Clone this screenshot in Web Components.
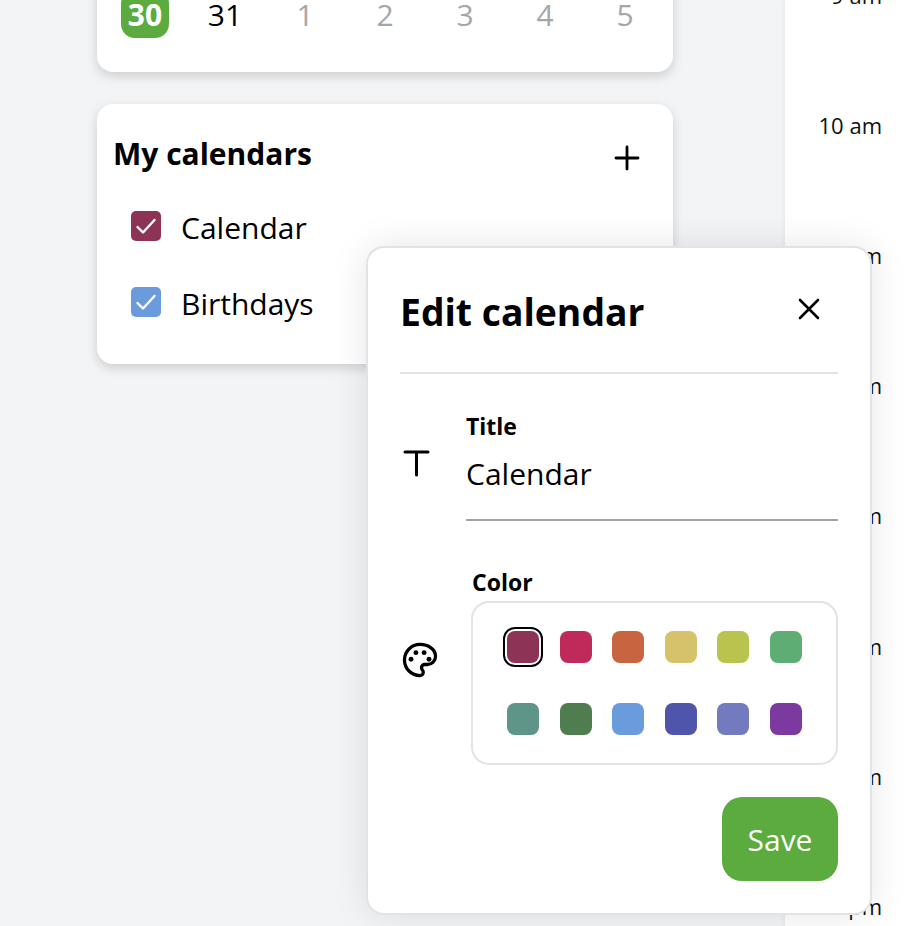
<!doctype html>
<html>
<head>
<meta charset="utf-8">
<style>
html, body { margin: 0; height: 100%; overflow: hidden; }
body { background: #f3f4f6; color: #000; font-family: "Open Sans", "Noto Sans", sans-serif; }
</style>
</head>
<body>
<calendar-page>
  <mini-month slot="sidebar"></mini-month>
  <my-calendars slot="sidebar">
    <calendar-row color="#8c3356">Calendar</calendar-row>
    <calendar-row color="#6a9bdc">Birthdays</calendar-row>
  </my-calendars>
  <hour-column slot="hours"></hour-column>
  <edit-calendar slot="dialog"></edit-calendar>
</calendar-page>

<script>
class CalendarPage extends HTMLElement {
  constructor() {
    super()
    this.attachShadow({ mode: 'open' })
    this.shadowRoot.innerHTML = `
<style>
:host { display: flex; position: relative; height: 926px; overflow: hidden; }
.left { width: 785px; box-sizing: border-box; padding-left: 97px; display: flex; flex-direction: column; gap: 32px; flex: none; }
.right { flex: 1; background: #fff; box-shadow: 0 0 6px rgba(0,0,0,.08); }
</style>
<div class="left"><slot name="sidebar"></slot></div>
<div class="right"><slot name="hours"></slot></div>
<slot name="dialog"></slot>
`
  }
}
customElements.define('calendar-page', CalendarPage)

class MiniMonth extends HTMLElement {
  constructor() {
    super()
    this.attachShadow({ mode: 'open' })
    let days = [[30, 'today'], [31, ''], [1, 'other'], [2, 'other'], [3, 'other'], [4, 'other'], [5, 'other']]
    this.shadowRoot.innerHTML = `
<style>
:host { display: block; width: 576px; box-sizing: border-box; height: 112px; margin-top: -40px; padding: 30px 8px 0; background: #fff; border-radius: 16px; box-shadow: 0 4px 12px rgba(0,0,0,.16); }
.days { display: grid; grid-template-columns: repeat(7, 80px); }
.day { height: 48px; width: 48px; justify-self: center; border-radius: 14px; display: flex; align-items: center; justify-content: center; font-size: 30px; }
.other { color: #a6a6a6; }
.today { background: #5cab3e; color: #fff; font-weight: 700; }
</style>
<div class="days">${days.map(d => `<div class="day ${d[1]}">${d[0]}</div>`).join('')}</div>
`
  }
}
customElements.define('mini-month', MiniMonth)

class MyCalendars extends HTMLElement {
  constructor() {
    super()
    this.attachShadow({ mode: 'open' })
    this.shadowRoot.innerHTML = `
<style>
:host { display: block; width: 576px; box-sizing: border-box; height: 260px; padding: 27px 32px 0 16px; background: #fff; border-radius: 16px; box-shadow: 0 4px 12px rgba(0,0,0,.16); }
.head { display: flex; justify-content: space-between; align-items: center; height: 44px; margin-bottom: 36px; }
h2 { margin: 0; font-size: 30px; font-weight: 700; }
svg { display: block; margin-top: 10px; margin-right: 1px; }
.rows { display: flex; flex-direction: column; gap: 46px; padding-left: 18px; }
</style>
<div class="head"><h2>My calendars</h2>
<svg width="26" height="26" viewBox="0 0 26 26" fill="none" stroke="#000" stroke-width="2.8" stroke-linecap="round"><path d="M13 2v22M2 13h22"/></svg></div>
<div class="rows"><slot></slot></div>
`
  }
}
customElements.define('my-calendars', MyCalendars)

class CalendarRow extends HTMLElement {
  constructor() {
    super()
    this.attachShadow({ mode: 'open' })
    this.shadowRoot.innerHTML = `
<style>
:host { display: flex; align-items: center; gap: 20px; height: 30px; font-size: 30px; }
.box { width: 30px; height: 30px; border-radius: 5px; flex: none; display: flex; align-items: center; justify-content: center; }
.text { padding-top: 3px; }
</style>
<span class="box" id="box"><svg width="24" height="24" viewBox="0 0 24 24" fill="none" stroke="#fff" stroke-width="2.4" stroke-linecap="round" stroke-linejoin="round"><path d="M3.5 13l5.5 5.5L20.500 6"/></svg></span>
<span class="text"><slot></slot></span>
`
  }
  connectedCallback() {
    this.shadowRoot.getElementById('box').style.background = this.getAttribute('color')
  }
}
customElements.define('calendar-row', CalendarRow)

class HourColumn extends HTMLElement {
  constructor() {
    super()
    this.attachShadow({ mode: 'open' })
    let hours = ['9 am', '10 am', '11 am', '12 pm', '1 pm', '2 pm', '3 pm', '4 pm']
    this.shadowRoot.innerHTML = `
<style>
:host { display: block; margin-top: -70.5px; padding-right: 32px; text-align: right; font-size: 22px; color: #111; }
div { height: 130.2px; display: flex; align-items: center; justify-content: flex-end; }
</style>
${hours.map(h => `<div>${h}</div>`).join('')}
`
  }
}
customElements.define('hour-column', HourColumn)

class EditCalendar extends HTMLElement {
  constructor() {
    super()
    this.attachShadow({ mode: 'open' })
    let colors = ['#8c3356', '#c02a5a', '#c8643f', '#d6c26a', '#b9c44e', '#5ead75',
      '#5f9488', '#4f7d50', '#6a9bdc', '#4f55aa', '#737ac0', '#7c3aa0']
    this.shadowRoot.innerHTML = `
<style>
:host { position: absolute; left: 366px; top: 246px; width: 506px; height: 669px; box-sizing: border-box; padding: 0 32px 0 32px; background: #fff; border: 2px solid #e2e2e8; border-radius: 18px; box-shadow: 0 0 36px rgba(0,0,0,.1); display: block; }
header { height: 126px; box-sizing: border-box; border-bottom: 2px solid #e2e2e8; display: flex; align-items: center; justify-content: space-between; padding: 2px 18px 0 0; }
header svg { margin-bottom: 4px; }
h1 { margin: 0; font-size: 37.3px; font-weight: 700; }
.row { display: flex; }
.icon { flex: none; display: flex; align-items: center; }
.title { margin-top: 37px; }
.title .icon { width: 66px; padding-left: 3px; box-sizing: border-box; padding-bottom: 6px; }
.field { flex: 1; }
label { display: block; font-size: 23px; font-weight: 700; line-height: 30px; }
.value { font-size: 30px; line-height: 48px; margin-top: 9px; height: 69px; border-bottom: 2px solid #a3a3a3; }
.color { margin-top: 46px; }
.color .icon { width: 71px; padding-left: 2px; box-sizing: border-box; padding-bottom: 12px; }
.color label { padding-left: 1px; }
.grid { display: grid; grid-template-columns: repeat(6, 32px); justify-content: space-between; row-gap: 40px; padding: 28px 34px; border: 2px solid #e2e2e8; border-radius: 18px; margin-top: 4px; }
.grid span { width: 32px; height: 32px; border-radius: 8px; }
.grid .on { outline: 2px solid #000; outline-offset: 2px; border-radius: 8px; }
.actions { display: flex; justify-content: flex-end; margin-top: 32px; }
button { width: 116px; height: 84px; border: 0; border-radius: 20px; background: #5cab3e; color: #fff; font: inherit; font-size: 30px; padding: 0; }
</style>
<header><h1>Edit calendar</h1>
<svg width="22" height="22" viewBox="0 0 22 22" fill="none" stroke="#000" stroke-width="2.6" stroke-linecap="round"><path d="M2 2l18 18M20 2L2 20"/></svg></header>
<div class="row title">
  <div class="icon"><svg width="27" height="27" viewBox="0 0 27 27" fill="none" stroke="#000" stroke-width="3" stroke-linecap="round"><path d="M2 2h23M13.500 2v23"/></svg></div>
  <div class="field"><label>Title</label><div class="value">Calendar</div></div>
</div>
<div class="row color">
  <div class="icon"><svg width="36" height="36" viewBox="1 1 22 22" fill="none" stroke="#000" stroke-width="2"><path stroke-linejoin="round" d="M12 2.500C6.750 2.500 2.500 6.750 2.500 12s4.250 9.500 9.500 9.500c1.100 0 2-.9 2-2 0-.55-.2-1-.55-1.400-.35-.4-.55-.85-.55-1.350 0-1.100.9-2 2-2H16.500c2.750 0 5-2.250 5-5 0-4.150-4.250-7.250-9.500-7.250z"/><g fill="#000" stroke="none"><circle cx="6.500" cy="11.500" r="1.500"/><circle cx="9.500" cy="7.500" r="1.500"/><circle cx="14.500" cy="7.500" r="1.500"/><circle cx="17.500" cy="11.500" r="1.500"/></g></svg></div>
  <div class="field"><label>Color</label>
    <div class="grid">${colors.map((c, i) => `<span class="${i == 0 ? 'on' : ''}" style="background:${c}"></span>`).join('')}</div>
  </div>
</div>
<div class="actions"><button>Save</button></div>
`
  }
}
customElements.define('edit-calendar', EditCalendar)
</script>
</body>
</html>
